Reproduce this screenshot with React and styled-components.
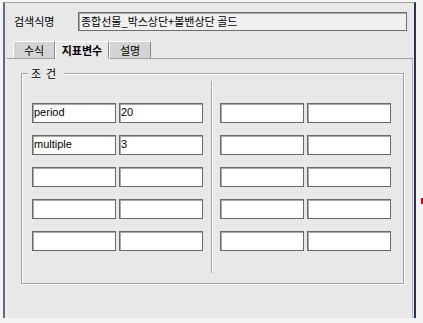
import React from "react";
import styled, { createGlobalStyle } from "styled-components";

const GlobalStyle = createGlobalStyle`
  html, body {
    margin: 0;
    padding: 0;
    background: #f4f4f4;
  }
  body {
    font-family: "Noto Sans CJK KR", "Liberation Sans", sans-serif;
    font-size: 11px;
    color: #000;
  }
`;

const Page = styled.div`
  position: relative;
  width: 423px;
  height: 323px;
  padding: 2px 0 0 3px;
  box-sizing: border-box;
  overflow: hidden;
`;

const Frame = styled.div`
  width: 413px;
  height: 316px;
  box-sizing: border-box;
  background: #e8e8e8;
  border-top: 1px solid #a4a4a4;
  border-left: 2px solid #5d6d83;
  border-right: 2px solid #1d3757;
  display: flex;
  flex-direction: column;
`;

const SearchRow = styled.div`
  display: flex;
  align-items: center;
  margin-top: 9px;
  padding-left: 9px;
`;

const Label = styled.span`
  width: 64px;
  font-size: 11px;
  line-height: 19px;
`;

const SearchInput = styled.div`
  width: 329px;
  height: 19px;
  box-sizing: border-box;
  background: #f0f0f0;
  border: 1px solid #6e6e6e;
  box-shadow: inset 1px 1px 0 #a8a8a8;
  padding-left: 2px;
  font-size: 11px;
  line-height: 17px;
  white-space: nowrap;
`;

const TabBar = styled.div`
  display: flex;
  margin-top: 10px;
  padding-left: 8px;
  height: 18px;
`;

const Tab = styled.div`
  width: ${(p) => p.$w}px;
  height: 18px;
  box-sizing: border-box;
  text-align: center;
  font-size: 11px;
  line-height: 16px;
  font-weight: ${(p) => (p.$active ? 700 : 400)};
  background: ${(p) => (p.$active ? "#e8e8e8" : "#d4d4d4")};
  border-top: 1px solid #ffffff;
  border-left: 1px solid #ffffff;
  border-right: 1px solid #8a8a8a;
  border-bottom: ${(p) => (p.$active ? "1px solid #e8e8e8" : "1px solid #a0a0a0")};
  position: relative;
  z-index: ${(p) => (p.$active ? 1 : 0)};
`;

const Panel = styled.div`
  flex: 1;
  margin: -1px 1px 0 1px;
  border-top: 1px solid #a0a0a0;
  border-right: 1px solid #b4b4b4;
  border-left: 1px solid #f6f6f6;
  padding: 14px 0 0 14px;
`;

const Group = styled.div`
  position: relative;
  width: 383px;
  height: 211px;
  box-sizing: border-box;
  border: 1px solid #a4a4a4;
  box-shadow: inset 1px 1px 0 #ffffff, 1px 1px 0 #ffffff;
  display: flex;
  padding: 7px 10px 10px 10px;
`;

const Legend = styled.span`
  position: absolute;
  top: -8px;
  left: 6px;
  padding: 0 3px;
  background: #e8e8e8;
  font-size: 11px;
  line-height: 14px;
  letter-spacing: 5px;
`;

const Half = styled.div`
  display: grid;
  grid-template-columns: 84px 84px;
  grid-auto-rows: 20px;
  column-gap: 3px;
  row-gap: 12px;
  align-content: start;
  padding-top: 22px;
`;

const Divider = styled.div`
  width: 1px;
  margin: 0 8px 0 8px;
  background: #a8a8a8;
  box-shadow: 1px 0 0 #ffffff;
`;

const Cell = styled.div`
  box-sizing: border-box;
  background: #ffffff;
  border: 1px solid #6a6a6a;
  box-shadow: inset 1px 1px 0 #a8a8a8;
  padding-left: 1px;
  font-family: "Liberation Sans", Arial, sans-serif;
  font-size: 11px;
  line-height: 17px;
  white-space: nowrap;
  overflow: hidden;
`;

const RedMark = styled.span`
  position: absolute;
  left: 421px;
  top: 198px;
  width: 2px;
  height: 6px;
  background: #e00000;
`;

const leftCells = [
  ["period", "20"],
  ["multiple", "3"],
  ["", ""],
  ["", ""],
  ["", ""],
];

const rightCells = [
  ["", ""],
  ["", ""],
  ["", ""],
  ["", ""],
  ["", ""],
];

export default function App() {
  return (
    <>
      <GlobalStyle />
      <Page>
        <Frame>
          <SearchRow>
            <Label>검색식명</Label>
            <SearchInput>종합선물_박스상단+볼밴상단 골드</SearchInput>
          </SearchRow>
          <TabBar>
            <Tab $w={42}>수식</Tab>
            <Tab $w={54} $active>
              지표변수
            </Tab>
            <Tab $w={42}>설명</Tab>
          </TabBar>
          <Panel>
            <Group>
              <Legend>조건</Legend>
              <Half>
                {leftCells.flat().map((v, i) => (
                  <Cell key={i}>{v}</Cell>
                ))}
              </Half>
              <Divider />
              <Half>
                {rightCells.flat().map((v, i) => (
                  <Cell key={i}>{v}</Cell>
                ))}
              </Half>
            </Group>
          </Panel>
        </Frame>
        <RedMark />
      </Page>
    </>
  );
}
